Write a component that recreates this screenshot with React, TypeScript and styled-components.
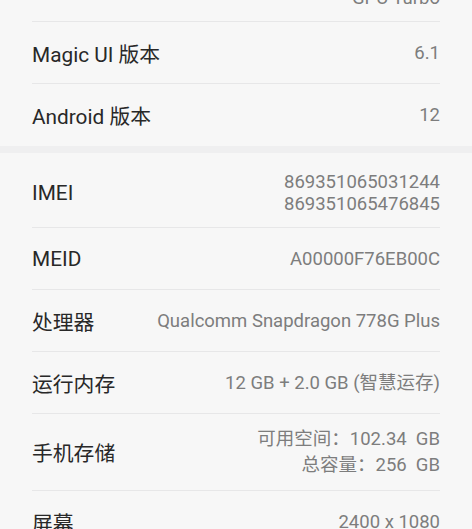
import React from "react";
import styled, { createGlobalStyle } from "styled-components";

const Global = createGlobalStyle`
  html, body { margin: 0; padding: 0; background: #efeff0; }
  body { font-family: Roboto, "Noto Sans CJK SC", sans-serif; overflow: hidden; }
  * { box-sizing: border-box; }
`;

const Page = styled.div`
  display: flex;
  flex-direction: column;
  gap: 7px;
  width: 472px;
  margin-top: -40px;
`;

const Card = styled.section<{ $padTop?: number }>`
  background: #f7f7f7;
  padding: ${(p) => p.$padTop ?? 0}px 32px 0 32px;
  display: flex;
  flex-direction: column;
`;

const Row = styled.div<{ $end?: boolean; $divider?: boolean }>`
  display: flex;
  justify-content: space-between;
  align-items: ${(p) => (p.$end ? "flex-end" : "center")};
  min-height: 62px;
  padding: 12px 0;
  border-bottom: ${(p) => (p.$divider ? "1px solid #e7e7e8" : "none")};
`;

const Label = styled.div`
  font-size: 20.8px;
  color: #282828;
  white-space: nowrap;
`;

const Value = styled.div<{ $lh?: number }>`
  font-size: 18.5px;
  line-height: ${(p) => p.$lh ?? 22}px;
  color: #7d7d7d;
  text-align: right;
  white-space: pre;
`;

type Item = { label: string; lines: string[]; lh?: number; end?: boolean };

const card1: Item[] = [
  { label: "", lines: ["GPU Turbo"], end: true },
  { label: "Magic UI 版本", lines: ["6.1"] },
  { label: "Android 版本", lines: ["12"] },
];

const card2: Item[] = [
  { label: "IMEI", lines: ["869351065031244", "869351065476845"] },
  { label: "MEID", lines: ["A00000F76EB00C"] },
  { label: "处理器", lines: ["Qualcomm Snapdragon 778G Plus"] },
  { label: "运行内存", lines: ["12 GB + 2.0 GB (智慧运存)"] },
  { label: "手机存储", lines: ["可用空间：102.34  GB", "总容量：256  GB"], lh: 26 },
  { label: "屏幕", lines: ["2400 x 1080"] },
];

function Rows({ items }: { items: Item[] }) {
  return (
    <>
      {items.map((it, i) => (
        <Row key={i} $end={it.end} $divider={i < items.length - 1}>
          <Label>{it.label}</Label>
          <Value $lh={it.lh}>
            {it.lines.map((l, j) => (
              <div key={j}>{l}</div>
            ))}
          </Value>
        </Row>
      ))}
    </>
  );
}

export default function App() {
  return (
    <>
      <Global />
      <Page>
        <Card>
          <Rows items={card1} />
        </Card>
        <Card $padTop={6}>
          <Rows items={card2} />
        </Card>
      </Page>
    </>
  );
}
